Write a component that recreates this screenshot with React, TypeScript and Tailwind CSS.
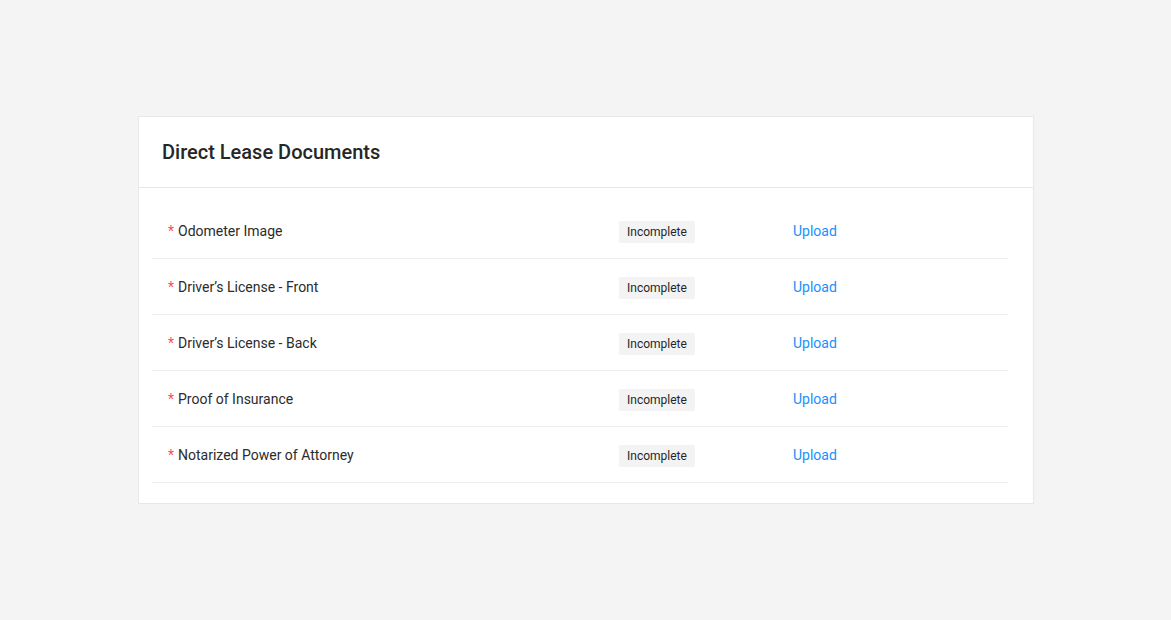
import React from "react";

const rows = [
  "Odometer Image",
  "Driver\u2019s License - Front",
  "Driver\u2019s License - Back",
  "Proof of Insurance",
  "Notarized Power of Attorney",
];

export default function App() {
  return (
    <div
      className="w-[1171px] h-[620px] bg-[#f4f4f4] pt-[116px] pl-[138px]"
      style={{ fontFamily: "Roboto, 'Liberation Sans', sans-serif" }}
    >
      <div className="w-[896px] bg-white border border-[#e8e8e8]">
        <div className="h-[71px] flex items-center pl-[23px] border-b border-[#e8e8e8]">
          <h1 className="text-[20px] font-medium text-[#262626] leading-none">
            Direct Lease Documents
          </h1>
        </div>
        <div className="pt-[15px] pb-[20px] pl-[13px] pr-[25px]">
          {rows.map((r) => (
            <div
              key={r}
              className="h-[56px] flex items-center border-b border-[#ececec]"
            >
              <div className="w-[467px] pl-[16px] pt-[2px] text-[14px] text-[#2b2b2b] flex items-center">
                <span className="text-[#ff4d4f] mr-[4px]">*</span>
                <span>{r}</span>
              </div>
              <div className="w-[174px]">
                <span className="inline-flex items-center h-[22px] px-[8px] rounded-[2px] bg-[#f3f3f3] text-[12px] text-[#262626]">
                  Incomplete
                </span>
              </div>
              <div className="pt-[2px] text-[14px] text-[#1890ff]">Upload</div>
            </div>
          ))}
        </div>
      </div>
    </div>
  );
}
